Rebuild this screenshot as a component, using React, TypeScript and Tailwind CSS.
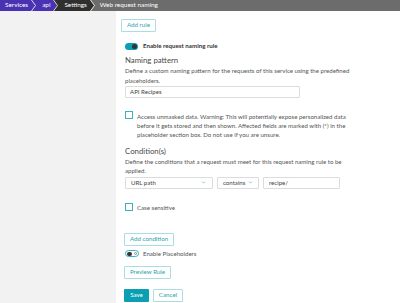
import { ChevronDown } from "lucide-react";

function Crumb({ label, bg, next }: { label: string; bg: string; next: string }) {
  return (
    <div className="flex h-full items-stretch">
      <div className="flex items-center pl-[5px] pr-[3px] text-white" style={{ background: bg }}>
        {label}
      </div>
      <svg width="6" height="11" viewBox="0 0 6 11" className="block">
        <rect x="0" y="0" width="6" height="11" fill={next} />
        <path d="M0 0 L4 5.5 L0 11 Z" fill={bg} />
        <path d="M0.5 0 L4.5 5.5 L0.5 11" fill="none" stroke="#ffffff" strokeWidth="0.8" />
      </svg>
    </div>
  );
}

function Checkbox() {
  return <div className="h-[8px] w-[8px] shrink-0 border border-[#35b3c3] bg-white" />;
}

function OutlineButton({ label, className = "" }: { label: string; className?: string }) {
  return (
    <button
      type="button"
      className={`flex h-[13px] shrink-0 items-center justify-center self-start whitespace-nowrap rounded-[1px] border border-[#a7dde3] bg-white text-[6.2px] leading-none text-[#2d9fb1] ${className}`}
    >
      {label}
    </button>
  );
}

export default function App() {
  return (
    <div className="h-[303px] w-[400px] overflow-hidden bg-white text-[#555] [font-family:Lato,'Open_Sans',sans-serif]">
      <div className="flex h-[11px] items-stretch bg-[#6c6c6c] text-[6.4px] leading-none">
        <Crumb label="Services" bg="#4a33b2" next="#4a33b2" />
        <Crumb label="api" bg="#4a33b2" next="#2f2f2f" />
        <Crumb label="Settings" bg="#2f2f2f" next="#6c6c6c" />
        <div className="flex items-center pl-[4px] text-white">Web request naming</div>
      </div>
      <div className="flex h-[292px]">
        <div className="w-[116px] shrink-0 bg-[#f2f2f2]" />
        <div className="flex flex-1 flex-col pl-[9px] pt-[8px]">
          <OutlineButton label="Add rule" className="ml-[-4px] w-[35px]" />

          <div className="mt-[10px] flex h-[8px] items-center gap-[5px]">
            <div className="flex h-[7px] w-[13px] items-center justify-end rounded-full bg-[#0a9fb2] pr-[1px]">
              <div className="h-[5px] w-[5px] rounded-full bg-[#333]" />
            </div>
            <span className="text-[6.2px] font-bold text-[#353535]">Enable request naming rule</span>
          </div>

          <div className="mt-[5px] text-[7.8px] leading-[11px] text-[#4a4a4a]">Naming pattern</div>
          <div className="w-[232px] text-[6.1px] leading-[9.5px] text-[#555]">
            Define a custom naming pattern for the requests of this service using the predefined placeholders.
          </div>
          <div className="mt-[1px] flex h-[12px] w-[175px] items-center rounded-[1px] border border-[#dcdcdc] px-[4px] text-[6.1px] text-[#444]">
            API Recipes
          </div>

          <div className="mt-[13px] flex gap-[4px]">
            <Checkbox />
            <div className="mt-[1px] w-[215px] text-[6.1px] leading-[9.2px] text-[#555]">
              Access unmasked data. Warning: This will potentially expose personalized data before it gets stored and then shown. Affected fields are marked with (*) in the placeholder section box. Do not use if you are unsure.
            </div>
          </div>

          <div className="mt-[6px] text-[7.8px] leading-[11px] text-[#4a4a4a]">Condition(s)</div>
          <div className="w-[232px] text-[6.1px] leading-[9.5px] text-[#555]">
            Define the conditions that a request must meet for this request naming rule to be applied.
          </div>
          <div className="mt-[1px] flex h-[12px] gap-[4px] text-[6.1px] text-[#444]">
            <div className="flex w-[88px] items-center justify-between rounded-[1px] border border-[#dcdcdc] pl-[5px] pr-[6px]">
              <span>URL path</span>
              <ChevronDown className="h-[5px] w-[5px] text-[#35b3c3]" strokeWidth={3} />
            </div>
            <div className="flex w-[42px] items-center justify-between rounded-[1px] border border-[#dcdcdc] pl-[5px] pr-[5px]">
              <span>contains</span>
              <ChevronDown className="h-[5px] w-[5px] text-[#35b3c3]" strokeWidth={3} />
            </div>
            <div className="flex w-[77px] items-center rounded-[1px] border border-[#dcdcdc] px-[5px]">recipe/</div>
          </div>

          <div className="mt-[14px] flex items-center gap-[4px]">
            <Checkbox />
            <span className="text-[6.1px] text-[#555]">Case sensitive</span>
          </div>

          <OutlineButton label="Add condition" className="ml-[-1px] mt-[21px] w-[50px]" />

          <div className="mt-[4px] flex h-[8px] items-center gap-[4px]">
            <div className="flex h-[7px] w-[14px] items-center justify-between rounded-full border border-[#35b3c3] bg-white px-[1px]">
              <div className="h-[4.5px] w-[4.5px] rounded-full bg-[#333]" />
              <div className="h-[3px] w-[3px] rounded-full border border-[#888] [border-width:0.6px]" />
            </div>
            <span className="text-[6.1px] text-[#555]">Enable Placeholders</span>
          </div>

          <OutlineButton label="Preview Rule" className="ml-[-1px] mt-[8px] w-[47px]" />

          <div className="ml-[-1px] mt-[10px] flex gap-[4px]">
            <button
              type="button"
              className="flex h-[13px] w-[25px] items-center justify-center rounded-[1px] bg-[#0a9fb2] text-[6.2px] leading-none text-white"
            >
              Save
            </button>
            <OutlineButton label="Cancel" className="w-[30px]" />
          </div>
        </div>
      </div>
    </div>
  );
}
